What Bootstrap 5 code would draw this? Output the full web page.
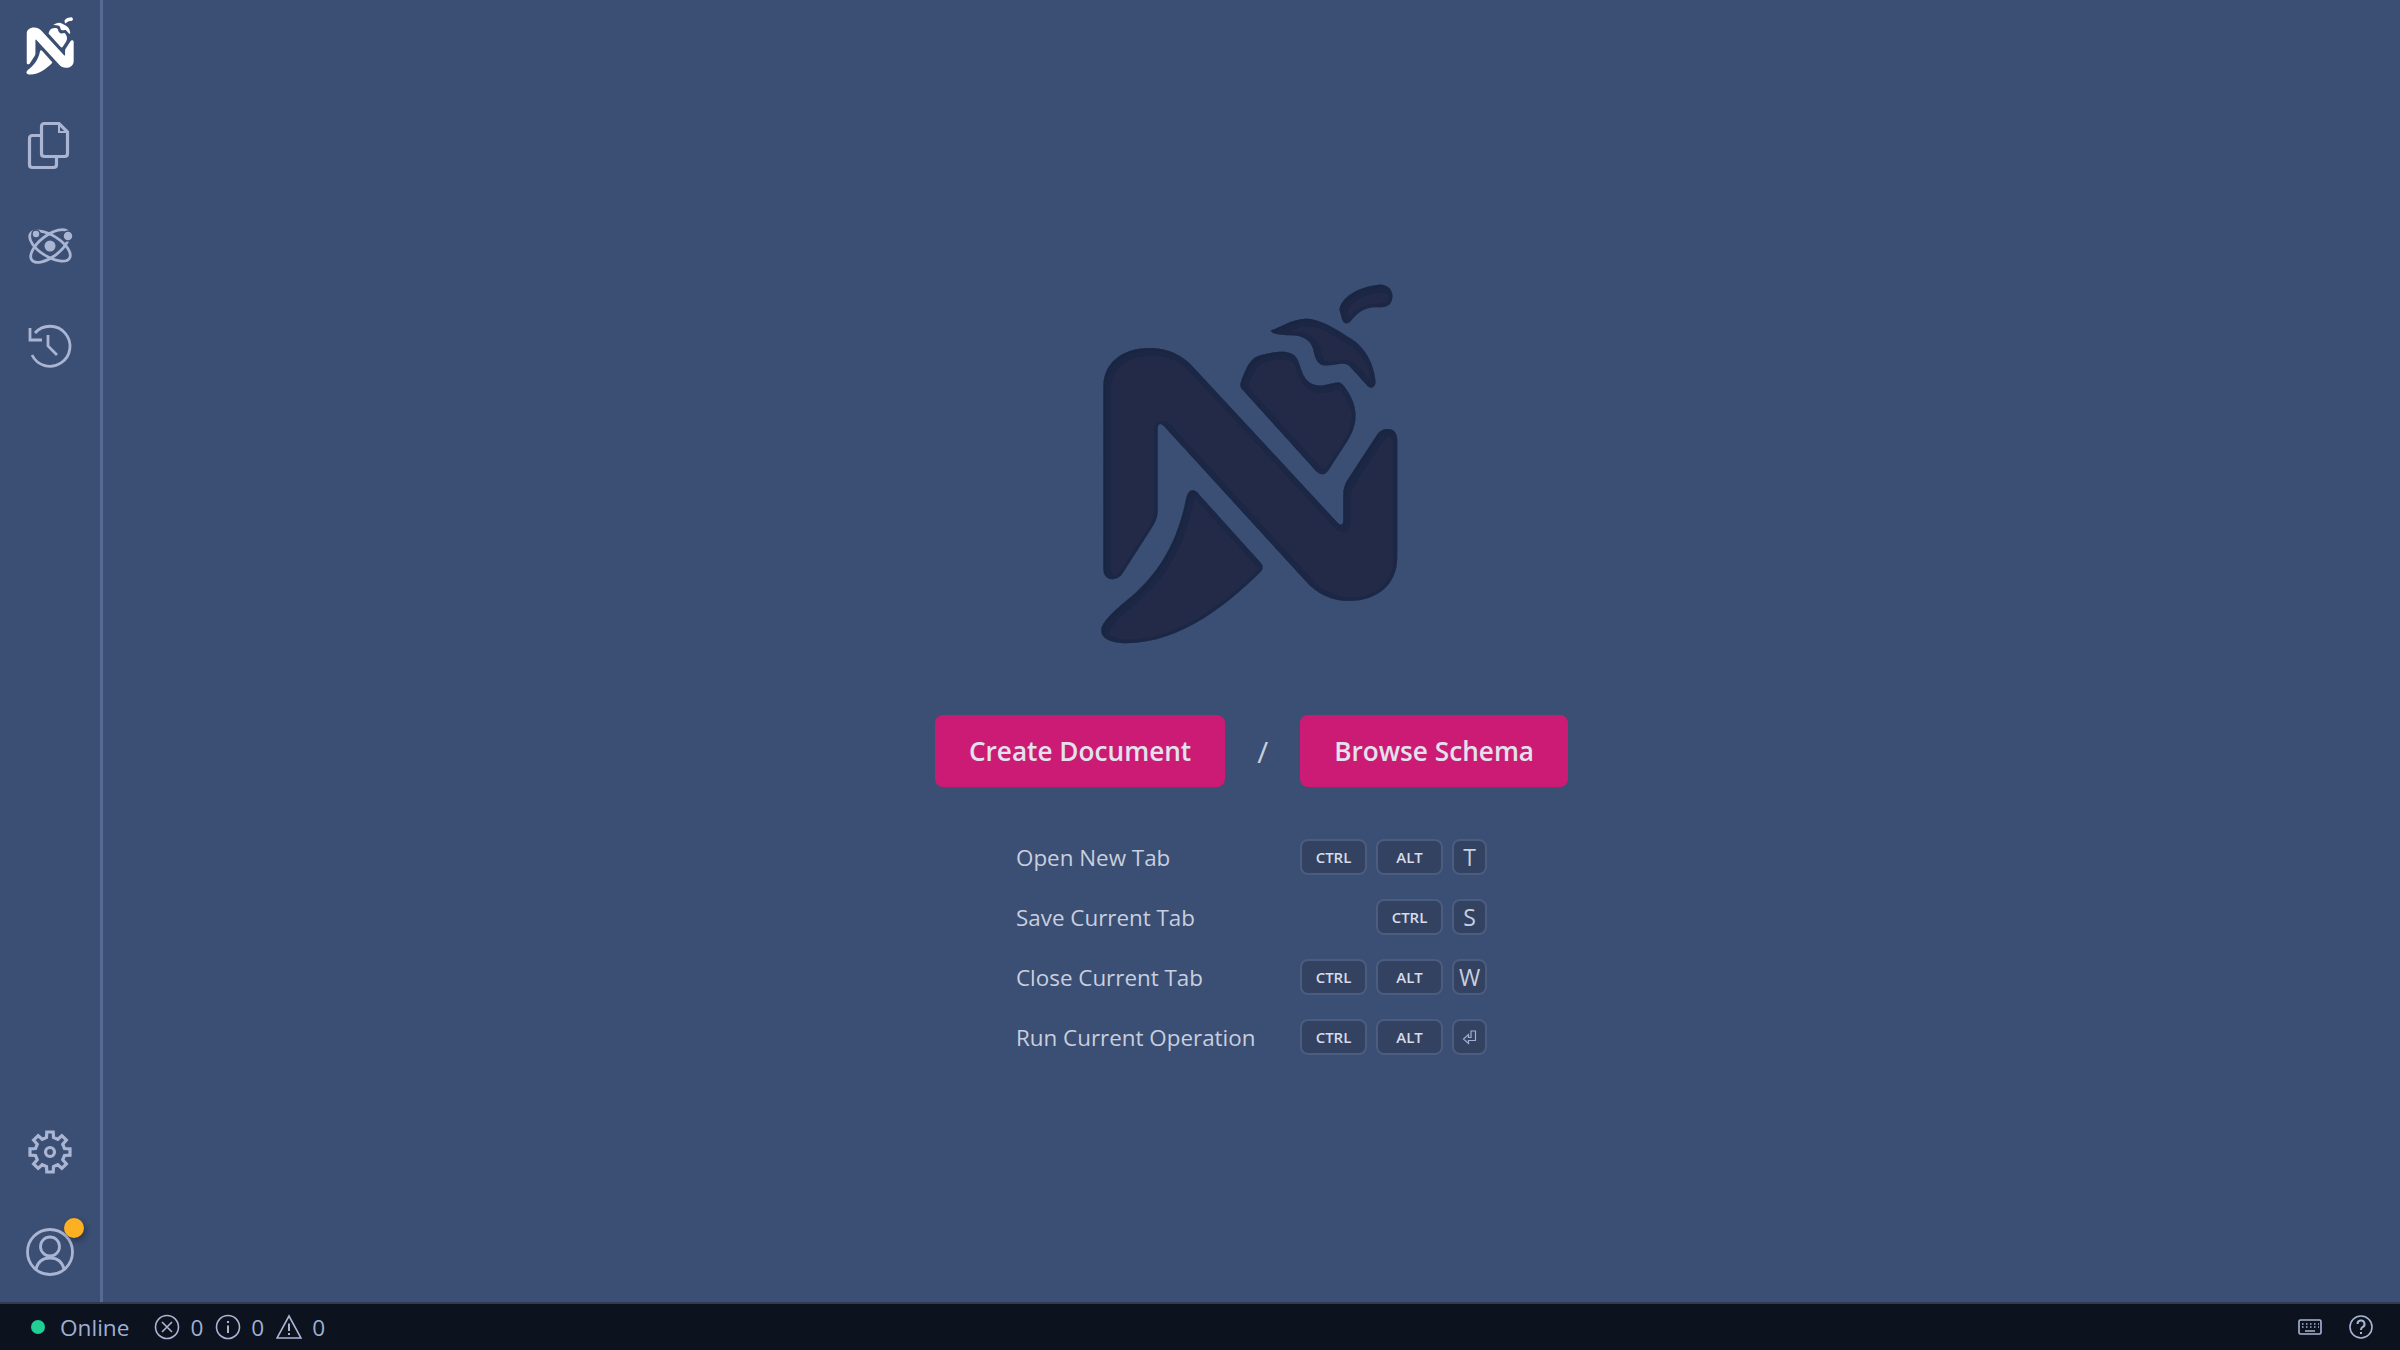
<!DOCTYPE html>
<html lang="en">
<head>
    <meta charset="UTF-8">
    <meta name="viewport" content="width=device-width, initial-scale=1.0">
    <title>Nightingale</title>
    <link href="https://cdn.jsdelivr.net/npm/bootstrap@5.3.2/dist/css/bootstrap.min.css" rel="stylesheet">
    <style>
        body {
            font-family: "Open Sans", "Noto Sans", sans-serif;
            background-color: #3b4e73;
            height: 100vh;
            overflow: hidden;
        }
        .side-rail {
            width: 103px;
            border-right: 3px solid #566a93;
        }
        .rail-btn {
            width: 100px;
            height: 100px;
            color: #a9b5d3;
            position: relative;
        }
        .rail-btn svg { fill: none; stroke: currentColor; stroke-width: 2.8; }
        .rail-btn .heavy { stroke-width: 3.2; }
        .rail-logo { height: 96px; padding-bottom: 4px; }
        .rail-logo svg { fill: #fff; stroke: none; }
        .dot-alert {
            position: absolute;
            left: 64px;
            top: 16px;
            width: 20px;
            height: 20px;
            border-radius: 50%;
            background: #fdb022;
            box-shadow: 2px 3px 6px rgba(0, 0, 0, .3);
        }
        .hero-logo { margin-top: 283px; margin-right: 6px; fill: #202c47; }
        .action-row { margin-top: 69px; }
        .btn-action {
            height: 72px;
            padding: 2px 34px 0;
            border: 0;
            border-radius: 8px;
            background: #cc1b74;
            color: #e2e2ec;
            font-size: 26.2px;
            font-weight: 600;
        }
        .slash-sep {
            width: 75px;
            text-align: center;
            color: #c8cfdf;
            font-size: 30px;
        }
        .keys-table {
            width: 471px;
            margin-top: 52px;
            gap: 24px;
            color: #c8cfdf;
            font-size: 22.4px;
        }
        .key-row { height: 36px; }
        .key-row > span:first-child { padding-top: 2px; }
        .key-group { gap: 9px; }
        .key-cap {
            height: 36px;
            width: 67px;
            border: 2px solid #4b5c81;
            border-radius: 8px;
            background: #344261;
            color: #d7dcea;
            font-size: 15px;
            font-weight: 600;
        }
        .key-cap.one {
            width: 35px;
            font-size: 23px;
            font-weight: 400;
            color: #c8cfdf;
        }
        .key-cap svg { fill: none; stroke: #9fb0d5; stroke-width: 1.2; }
        .status-strip {
            height: 48px;
            flex: none;
            border-top: 2px solid #333c4f;
            background: #0c121e;
            color: #9fb0d5;
            font-size: 22.6px;
            padding: 0 27px 0 31px;
        }
        .status-strip svg { fill: none; stroke: #a9b5d3; stroke-width: 1.6; flex: none; }
        .live-dot {
            width: 14px;
            height: 14px;
            border-radius: 50%;
            background: #20cf96;
            margin-right: 15px;
        }
        .online-label { margin-right: 25px; padding-top: 1px; }
        .stat-count { margin-left: 10px; margin-right: 12px; padding-top: 1px; }
        .help-mark { margin-left: 27px; }
    </style>
</head>
<body class="d-flex flex-column">
<svg width="0" height="0" class="position-absolute">
    <defs>
        <filter id="inset" x="-5%" y="-5%" width="110%" height="110%">
            <feOffset in="SourceAlpha" dx="1.500" dy="2"/>
            <feGaussianBlur stdDeviation="2.500" result="soft"/>
            <feComposite in="SourceAlpha" in2="soft" operator="out" result="rim"/>
            <feFlood flood-color="#131b30" flood-opacity=".4"/>
            <feComposite in2="rim" operator="in" result="tint"/>
            <feMerge>
                <feMergeNode in="SourceGraphic"/>
                <feMergeNode in="tint"/>
            </feMerge>
        </filter>
    </defs>
    <symbol id="brand" viewBox="90 40 900 1090">
        <path d="M103 350C103 280 160 235 240 235C295 235 340 255 375 295L808 762Q822 772 823 755L823 680C823 655 830 640 840 625L925 495C940 472 985 470 985 510L985 865C985 945 925 995 840 995C790 995 745 975 710 935L285 470Q268 455 266 475L266 720C266 745 258 760 245 780L160 912C145 938 103 935 103 900Z"/>
        <path d="M352 685C358 660 375 655 390 675L575 880Q587 893 575 907C480 1000 340 1120 170 1122C110 1122 80 1095 105 1060C125 1030 165 1000 200 970C270 905 325 820 352 685Z"/>
        <path d="M515 340C525 310 540 270 565 260C590 250 630 245 650 247C680 250 688 270 695 295C705 330 725 348 755 348C775 348 800 335 815 340C830 350 860 395 860 435C860 470 850 490 835 515L780 600C770 618 755 618 742 605L525 365C515 355 512 350 515 340Z"/>
        <path d="M605 183C640 170 670 148 710 147C750 147 790 170 850 210C890 235 915 285 920 335C920 355 905 362 892 345C870 320 850 300 840 288C825 275 795 288 770 288C745 288 738 265 733 240C725 210 700 197 665 197C640 197 610 195 605 183Z"/>
        <path d="M812 120C815 85 870 48 935 45C965 45 980 75 965 100C955 115 935 113 915 113C885 115 865 130 845 155C835 165 825 162 820 150Z"/>
    </symbol>
</svg>

<div class="d-flex flex-grow-1" style="min-height:0">
    <aside class="side-rail d-flex flex-column flex-shrink-0">
        <a class="rail-btn rail-logo d-flex align-items-center justify-content-center">
            <svg width="48" height="58"><use href="#brand"/></svg>
        </a>
        <a class="rail-btn d-flex align-items-center justify-content-center">
            <svg class="heavy" width="48" height="52" viewBox="0 0 48 52">
                <path d="M18.500 3.500H33L41.500 12V33.500Q41.500 36.500 38.500 36.500H18.500Q15.500 36.500 15.500 33.500V6.500Q15.500 3.500 18.500 3.500Z"/>
                <path d="M33 3.500V12H41.500" stroke-width="2"/>
                <path d="M15.500 15.500H6.500Q3.500 15.500 3.500 18.500V44.500Q3.500 47.500 6.500 47.500H27.500Q30.500 47.500 30.500 44.500V36.500"/>
            </svg>
        </a>
        <a class="rail-btn d-flex align-items-center justify-content-center">
            <svg width="48" height="44" viewBox="0 0 48 44">
                <ellipse cx="24" cy="22" rx="23" ry="10.500" transform="rotate(-38 24 22)"/>
                <ellipse cx="24" cy="22" rx="23" ry="10.500" transform="rotate(32 24 22)"/>
                <circle cx="24" cy="22" r="5.500" fill="#a9b5d3" stroke="none"/>
                <circle cx="42" cy="12" r="5" fill="#a9b5d3" stroke="#3b4e73" stroke-width="1.500"/>
                <circle cx="10" cy="10" r="4" fill="#a9b5d3" stroke="#3b4e73" stroke-width="1.500"/>
            </svg>
        </a>
        <a class="rail-btn d-flex align-items-center justify-content-center">
            <svg width="48" height="48" viewBox="0 0 48 48">
                <path d="M6 33A20 20 0 1 0 9 11"/>
                <path d="M4 6V18H16"/>
                <path d="M22 13V24L31 33"/>
            </svg>
        </a>
        <a class="rail-btn mt-auto d-flex align-items-center justify-content-center">
            <svg class="heavy" width="46" height="46" viewBox="0 0 46 46">
                <polygon transform="translate(23 23)" points="-3.500,-14.500 -3.200,-20 3.200,-20 3.500,-14.500 7.780,-12.730 11.880,-16.400 16.400,-11.880 12.730,-7.780 14.500,-3.500 20,-3.200 20,3.200 14.500,3.500 12.730,7.780 16.400,11.880 11.880,16.400 7.780,12.730 3.500,14.500 3.200,20 -3.200,20 -3.500,14.500 -7.780,12.730 -11.880,16.400 -16.400,11.880 -12.730,7.780 -14.500,3.500 -20,3.200 -20,-3.200 -14.500,-3.500 -12.730,-7.780 -16.400,-11.880 -11.880,-16.400 -7.780,-12.730"/>
                <circle cx="23" cy="23" r="4.500"/>
            </svg>
        </a>
        <a class="rail-btn d-flex align-items-center justify-content-center">
            <svg width="48" height="48" viewBox="0 0 48 48">
                <circle cx="24" cy="24" r="22.500"/>
                <circle cx="24" cy="18.500" r="9.500"/>
                <path d="M10 41C12 33 17 30 24 30C31 30 36 33 38 41"/>
            </svg>
            <span class="dot-alert"></span>
        </a>
    </aside>

    <main class="flex-grow-1 d-flex flex-column align-items-center">
        <svg class="hero-logo" width="300" height="363"><use href="#brand" filter="url(#inset)"/></svg>
        <div class="action-row d-flex align-items-center">
            <button class="btn-action">Create Document</button>
            <span class="slash-sep">/</span>
            <button class="btn-action">Browse Schema</button>
        </div>
        <div class="keys-table d-flex flex-column">
            <div class="key-row d-flex align-items-center justify-content-between">
                <span>Open New Tab</span>
                <span class="key-group d-flex">
                    <span class="key-cap d-flex align-items-center justify-content-center">CTRL</span>
                    <span class="key-cap d-flex align-items-center justify-content-center">ALT</span>
                    <span class="key-cap one d-flex align-items-center justify-content-center">T</span>
                </span>
            </div>
            <div class="key-row d-flex align-items-center justify-content-between">
                <span>Save Current Tab</span>
                <span class="key-group d-flex">
                    <span class="key-cap d-flex align-items-center justify-content-center">CTRL</span>
                    <span class="key-cap one d-flex align-items-center justify-content-center">S</span>
                </span>
            </div>
            <div class="key-row d-flex align-items-center justify-content-between">
                <span>Close Current Tab</span>
                <span class="key-group d-flex">
                    <span class="key-cap d-flex align-items-center justify-content-center">CTRL</span>
                    <span class="key-cap d-flex align-items-center justify-content-center">ALT</span>
                    <span class="key-cap one d-flex align-items-center justify-content-center">W</span>
                </span>
            </div>
            <div class="key-row d-flex align-items-center justify-content-between">
                <span>Run Current Operation</span>
                <span class="key-group d-flex">
                    <span class="key-cap d-flex align-items-center justify-content-center">CTRL</span>
                    <span class="key-cap d-flex align-items-center justify-content-center">ALT</span>
                    <span class="key-cap one d-flex align-items-center justify-content-center">
                        <svg width="15" height="15" viewBox="0 0 15 15"><path d="M9 1H13.500V10.500H6.500V13.500L1.500 9L6.500 4.500V7.500H9Z"/></svg>
                    </span>
                </span>
            </div>
        </div>
    </main>
</div>

<footer class="status-strip d-flex align-items-center">
    <span class="live-dot"></span>
    <span class="online-label">Online</span>
    <svg width="26" height="26" viewBox="0 0 26 26"><circle cx="13" cy="13" r="11.500"/><path d="M8 8L18 18M18 8L8 18"/></svg>
    <span class="stat-count">0</span>
    <svg width="26" height="26" viewBox="0 0 26 26"><circle cx="13" cy="13" r="11.500"/><path d="M13 11.500V19M13 7V9" stroke-width="2"/></svg>
    <span class="stat-count">0</span>
    <svg width="26" height="26" viewBox="0 0 26 26"><path d="M13 2L25 24H1Z"/><path d="M13 9.500V17M13 19V21" stroke-width="2"/></svg>
    <span class="stat-count">0</span>
    <svg class="ms-auto" width="24" height="16" viewBox="0 0 24 16"><rect x="1" y="1" width="22" height="14" rx="1.500"/><path d="M4 5H5.500M8 5H9.500M12 5H13.500M16 5H17.500M20 5H21M4 8H5.500M8 8H9.500M12 8H13.500M16 8H17.500M20 8H21M7 12H17" stroke-width="1.500"/></svg>
    <svg class="help-mark" width="24" height="24" viewBox="0 0 24 24"><circle cx="12" cy="12" r="11"/><path d="M8.500 9A3.500 3.500 0 1 1 13.500 12.200Q12 13 12 15" stroke-width="2"/><path d="M12 17V19" stroke-width="2"/></svg>
</footer>
</body>
</html>
